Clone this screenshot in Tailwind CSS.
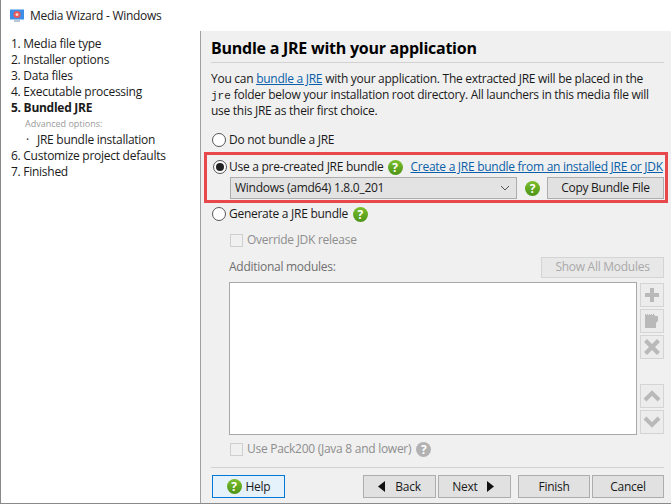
<!DOCTYPE html>
<html lang="en">
  <head>
    <meta charset="UTF-8" />
    <title>Media Wizard - Windows</title>
    <script src="https://cdn.jsdelivr.net/npm/@tailwindcss/browser@4"></script>
  </head>
  <body class="w-[671px] h-[504px] overflow-hidden bg-white font-['Open_Sans',sans-serif] text-[12px] leading-4 text-[#1a1a1a] tracking-[-0.27px]">
    <div class="w-[671px] h-[504px] flex flex-col border-l border-b border-[#8a8a8a]">
      <!-- Title bar -->
      <div class="h-[31px] flex items-center pl-[8px] gap-[5px] text-[#222]">
        <svg width="16" height="16" viewBox="0 0 16 16">
          <rect x="1" y="1.5" width="14" height="10" fill="#3d8ee6" />
          <circle cx="8" cy="6.5" r="3.6" fill="#e8585a" />
          <circle cx="8" cy="6.5" r="1.5" fill="#f6d6d0" />
          <rect x="5" y="12" width="6" height="2" fill="#b9c6d4" />
        </svg>
        <span>Media Wizard - Windows</span>
      </div>

      <div class="flex flex-1 min-h-0">
        <!-- Steps -->
        <ol class="w-[199px] shrink-0 pt-[5px] pl-[10px]">
          <li class="h-4">1. Media file type</li>
          <li class="h-4">2. Installer options</li>
          <li class="h-4">3. Data files</li>
          <li class="h-4">4. Executable processing</li>
          <li class="h-4 font-bold">5. Bundled JRE</li>
          <li class="h-4 pl-[14px] text-[9px] text-[#9a9a9a] tracking-normal">Advanced options:</li>
          <li class="h-4 flex"><span class="w-[26px] pl-[15px]">·</span>JRE bundle installation</li>
          <li class="h-4">6. Customize project defaults</li>
          <li class="h-4">7. Finished</li>
        </ol>

        <!-- Main panel -->
        <main class="flex-1 min-w-0 bg-[#f0f0f0] border-l border-[#a0a0a0] pl-[10px] pr-[7px] flex flex-col">
          <h1 class="h-[32px] pt-[6px] text-[16px] leading-[22px] font-bold text-black tracking-[-0.25px] border-b border-[#d2d2d2]">Bundle a JRE with your application</h1>
          <p class="mt-[8px] h-[48px] w-[456px] whitespace-nowrap">
            You can <a class="text-[#0a5fa8] underline">bundle a JRE</a> with your application. The extracted JRE will be placed in the<br />
            <span class="font-['Liberation_Mono',monospace] text-[11px] leading-none tracking-normal">jre</span> folder below your installation root directory. All launchers in this media file will<br />
            use this JRE as their first choice.
          </p>

          <label class="mt-[13px] h-[16px] flex items-center gap-[3px]">
            <span class="w-[14px] h-[14px] ml-[1px] rounded-full border border-[#555] bg-white"></span>
            Do not bundle a JRE
          </label>

          <!-- Highlighted option -->
          <div class="mt-[4px] -ml-[7px] w-[464px] shrink-0 h-[51px] border-[3px] border-[#e8474c] pl-[5px] pr-[1px]">
            <div class="h-[21px] pt-[3px] flex items-center gap-[2px] whitespace-nowrap">
              <span class="w-[14px] h-[14px] ml-[1px] shrink-0 rounded-full border border-[#555] bg-white flex items-center justify-center"><span class="w-[8px] h-[8px] rounded-full bg-[#222]"></span></span>
              <span>Use a pre-created JRE bundle</span>
              <span class="ml-[2px] w-[15px] h-[15px] shrink-0 rounded-full bg-linear-to-b from-[#7cbf2c] to-[#4d9418] text-white text-[12px] leading-[15px] font-bold text-center tracking-normal">?</span>
              <a class="ml-[6px] text-[#0a5fa8] underline">Create a JRE bundle from an installed JRE or JDK</a>
            </div>
            <div class="h-[22px] mt-[1px] flex items-center">
              <div class="ml-[18px] w-[287px] shrink-0 h-[22px] bg-[#e3e3e3] border border-[#adadad] flex items-center justify-between pl-[4px] pr-[6px]">
                <span>Windows (amd64) 1.8.0_201</span>
                <svg width="10" height="6" viewBox="0 0 10 6"><path d="M1 1l4 4 4-4" fill="none" stroke="#555" stroke-width="1" /></svg>
              </div>
              <span class="ml-[8px] w-[15px] h-[15px] shrink-0 rounded-full bg-linear-to-b from-[#7cbf2c] to-[#4d9418] text-white text-[12px] leading-[15px] font-bold text-center tracking-normal">?</span>
              <button class="ml-[7px] w-[117px] shrink-0 h-[22px] bg-[#e1e1e1] border border-[#adadad]">Copy Bundle File</button>
            </div>
          </div>

          <label class="mt-[3px] h-[16px] flex items-center gap-[3px]">
            <span class="w-[14px] h-[14px] ml-[1px] rounded-full border border-[#555] bg-white"></span>
            <span>Generate a JRE bundle</span>
            <span class="ml-[2px] w-[15px] h-[15px] rounded-full bg-linear-to-b from-[#7cbf2c] to-[#4d9418] text-white text-[12px] leading-[15px] font-bold text-center tracking-normal">?</span>
          </label>

          <label class="mt-[10px] ml-[19px] h-[16px] flex items-center gap-[4px] text-[#8e8e8e]">
            <span class="w-[13px] h-[13px] border border-[#cfcfcf] bg-[#f0f0f0]"></span>
            Override JDK release
          </label>

          <div class="mt-[8px] ml-[18px] h-[22px] flex items-center justify-between text-[#6f6f6f]">
            <span>Additional modules:</span>
            <button class="w-[123px] h-[21px] bg-[#e8e8e8] border border-[#d4d4d4] text-[#a8a8a8]">Show All Modules</button>
          </div>

          <div class="mt-[4px] ml-[18px] flex gap-[3px] h-[153px]">
            <div class="w-[409px] bg-white border border-[#a8a8a8]"></div>
            <div class="w-[24px] pt-[1px] flex flex-col">
              <button class="h-[24px] border border-[#d4d4d4] bg-[#ececec] flex items-center justify-center">
                <svg width="16" height="16" viewBox="0 0 16 16"><path d="M6 1h4v5h5v4h-5v5H6v-5H1V6h5z" fill="#b9b9b9" /></svg>
              </button>
              <button class="h-[24px] mt-[2px] border border-[#d4d4d4] bg-[#ececec] flex items-center justify-center">
                <svg width="16" height="16" viewBox="0 0 16 16"><path d="M1 1h1v1h1V1h1v1h1V1h1v1h1V1h1v1h1V1h1l1 2h3v5l-2 2v5H1z" fill="#b9b9b9" /></svg>
              </button>
              <button class="h-[24px] mt-[2px] border border-[#d4d4d4] bg-[#ececec] flex items-center justify-center">
                <svg width="16" height="16" viewBox="0 0 16 16"><path d="M3 0l5 5 5-5 3 3-5 5 5 5-3 3-5-5-5 5-3-3 5-5-5-5z" fill="#b9b9b9" /></svg>
              </button>
              <button class="h-[24px] mt-[25px] border border-[#d4d4d4] bg-[#ececec] flex items-center justify-center">
                <svg width="18" height="12" viewBox="0 0 18 12"><path d="M2 10l7-7 7 7" fill="none" stroke="#b9b9b9" stroke-width="4" /></svg>
              </button>
              <button class="h-[24px] mt-[2px] border border-[#d4d4d4] bg-[#ececec] flex items-center justify-center">
                <svg width="18" height="12" viewBox="0 0 18 12"><path d="M2 2l7 7 7-7" fill="none" stroke="#b9b9b9" stroke-width="4" /></svg>
              </button>
            </div>
          </div>

          <label class="mt-[6px] ml-[19px] h-[16px] flex items-center gap-[4px] text-[#8e8e8e]">
            <span class="w-[13px] h-[13px] border border-[#cfcfcf] bg-[#f0f0f0]"></span>
            <span>Use Pack200 (Java 8 and lower)</span>
            <span class="ml-[1px] w-[15px] h-[15px] rounded-full bg-[#b2b2b2] text-white text-[12px] leading-[15px] font-bold text-center tracking-normal">?</span>
          </label>

          <!-- Footer buttons -->
          <div class="mt-[10px] border-t border-[#d2d2d2] pt-[7px] pl-[1px] flex items-center">
            <button class="w-[73px] h-[23px] bg-[#e5f1fb] border border-[#0078d7] flex items-center justify-center gap-[4px]">
              <span class="w-[15px] h-[15px] rounded-full bg-linear-to-b from-[#7cbf2c] to-[#4d9418] text-white text-[12px] leading-[15px] font-bold text-center tracking-normal">?</span>
              Help
            </button>
            <button class="ml-[78px] w-[73px] h-[23px] bg-[#e1e1e1] border border-[#adadad] flex items-center justify-center gap-[10px]">
              <svg width="7" height="11" viewBox="0 0 7 11"><path d="M7 0v11L0 5.5z" fill="#111" /></svg>
              Back
            </button>
            <button class="ml-[2px] w-[73px] h-[23px] bg-[#e1e1e1] border border-[#adadad] flex items-center justify-center gap-[9px] pr-[3px]">
              Next
              <svg width="7" height="11" viewBox="0 0 7 11"><path d="M0 0v11l7-5.5z" fill="#111" /></svg>
            </button>
            <button class="ml-[7px] w-[72px] h-[23px] bg-[#e1e1e1] border border-[#adadad]">Finish</button>
            <button class="ml-[2px] w-[72px] h-[23px] bg-[#e1e1e1] border border-[#adadad]">Cancel</button>
          </div>
        </main>
      </div>
    </div>
  </body>
</html>
